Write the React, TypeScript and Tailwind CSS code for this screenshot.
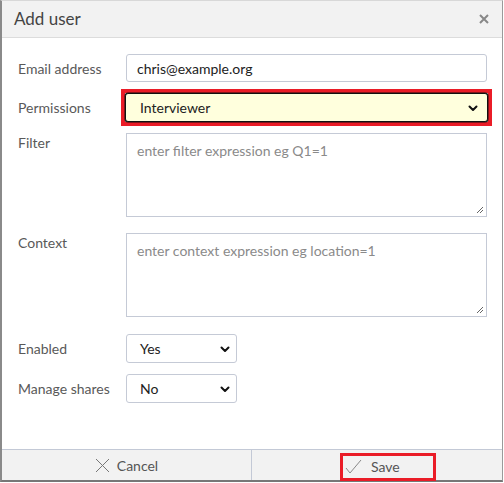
import React from 'react';

const Chevron: React.FC = () => (
  <svg width="12" height="12" viewBox="0 0 12 12" className="shrink-0">
    <path d="M2.5 4.5 L6 8 L9.5 4.5" fill="none" stroke="#111" strokeWidth="2" strokeLinecap="round" strokeLinejoin="round" />
  </svg>
);

const ResizeGrip: React.FC = () => (
  <svg width="9" height="9" viewBox="0 0 9 9" className="absolute bottom-[2px] right-[2px]">
    <path d="M8 2 L2 8 M8 5 L5 8" stroke="#666" strokeWidth="1" />
  </svg>
);

const Label: React.FC<{ children: React.ReactNode; top?: boolean }> = ({ children, top }) => (
  <div className={`w-[108px] shrink-0 text-[14px] text-[#595959] ${top ? '-mt-[1px]' : ''}`}>{children}</div>
);

const App: React.FC = () => {
  return (
    <div
      className="w-[504px] h-[483px] bg-white overflow-hidden"
      style={{ fontFamily: 'Lato, "Open Sans", sans-serif' }}
    >
      <div className="w-[503px] h-[482px] border-l-2 border-r border-b-2 border-t border-l-[#8a8a8a] border-r-[#9a9a9a] border-b-[#777] border-t-[#d8d8d8] flex flex-col">
        {/* Header */}
        <div className="h-[37px] shrink-0 bg-[#f2f2f2] border-b border-[#dcdcdc] flex items-center justify-between pl-[12px] pr-[13px]">
          <span className="text-[17px] text-[#444]">Add user</span>
          <svg width="10" height="10" viewBox="0 0 10 10">
            <path d="M1 1 L9 9 M9 1 L1 9" stroke="#888" strokeWidth="2" />
          </svg>
        </div>

        {/* Body */}
        <div className="flex-1 flex flex-col pl-[16px] pt-[16px]">
          <div className="flex items-center h-[28px]">
            <Label>Email address</Label>
            <div className="w-[361px] h-[28px] border border-[#c5cad6] rounded-[3px] flex items-center px-[10px] text-[14px] text-[#222]">
              chris@example.org
            </div>
          </div>

          <div className="flex items-center h-[37px] mt-[7px]">
            <Label>Permissions</Label>
            <div className="-ml-[5px] w-[371px] h-[37px] border-[4px] border-[#ea1c27] flex">
              <div className="flex-1 bg-[#ffffdd] border-[1.5px] border-[#111] rounded-[3px] flex items-center justify-between pl-[14px] pr-[8px] text-[14px] text-[#222] shadow-[0_0_0_0.5px_#111]">
                <span>Interviewer</span>
                <Chevron />
              </div>
            </div>
          </div>

          <div className="flex items-start mt-[7px]">
            <Label top>Filter</Label>
            <div className="relative w-[361px] h-[84px] border border-[#c5cad6] px-[10px] pt-[6px] text-[14px] text-[#8a8a8a]">
              enter filter expression eg Q1=1
              <ResizeGrip />
            </div>
          </div>

          <div className="flex items-start mt-[16px]">
            <Label top>Context</Label>
            <div className="relative w-[361px] h-[84px] border border-[#c5cad6] px-[10px] pt-[6px] text-[14px] text-[#8a8a8a]">
              enter context expression eg location=1
              <ResizeGrip />
            </div>
          </div>

          <div className="flex items-center h-[29px] mt-[17px]">
            <Label>Enabled</Label>
            <div className="w-[111px] h-[29px] border border-[#c5cad6] rounded-[3px] flex items-center justify-between pl-[13px] pr-[5px] text-[14px] text-[#222]">
              <span>Yes</span>
              <Chevron />
            </div>
          </div>

          <div className="flex items-center h-[29px] mt-[11px]">
            <Label>Manage shares</Label>
            <div className="w-[111px] h-[29px] border border-[#c5cad6] rounded-[3px] flex items-center justify-between pl-[13px] pr-[5px] text-[14px] text-[#222]">
              <span>No</span>
              <Chevron />
            </div>
          </div>
        </div>

        {/* Footer */}
        <div className="h-[31px] shrink-0 bg-[#f2f2f2] border-t border-[#c3c9d6] flex">
          <div className="w-[250px] flex items-center justify-center gap-[7px] text-[14px] text-[#555] border-r border-[#c3c9d6]">
            <svg width="15" height="15" viewBox="0 0 15 15">
              <path d="M1 1 L14 14 M14 1 L1 14" stroke="#777" strokeWidth="1" />
            </svg>
            <span>Cancel</span>
          </div>
          <div className="flex-1 flex items-center justify-center">
            <div className="ml-[22px] w-[96px] h-[28px] -mb-[3px] border-[3px] border-[#ea1c27] flex items-center pl-[2px] gap-[9px] text-[14px] text-[#555]">
              <svg width="17" height="16" viewBox="0 0 17 16">
                <path d="M1 9 L5 14 L16 1" fill="none" stroke="#888" strokeWidth="1" />
              </svg>
              <span>Save</span>
            </div>
          </div>
        </div>
      </div>
    </div>
  );
};

export default App;
